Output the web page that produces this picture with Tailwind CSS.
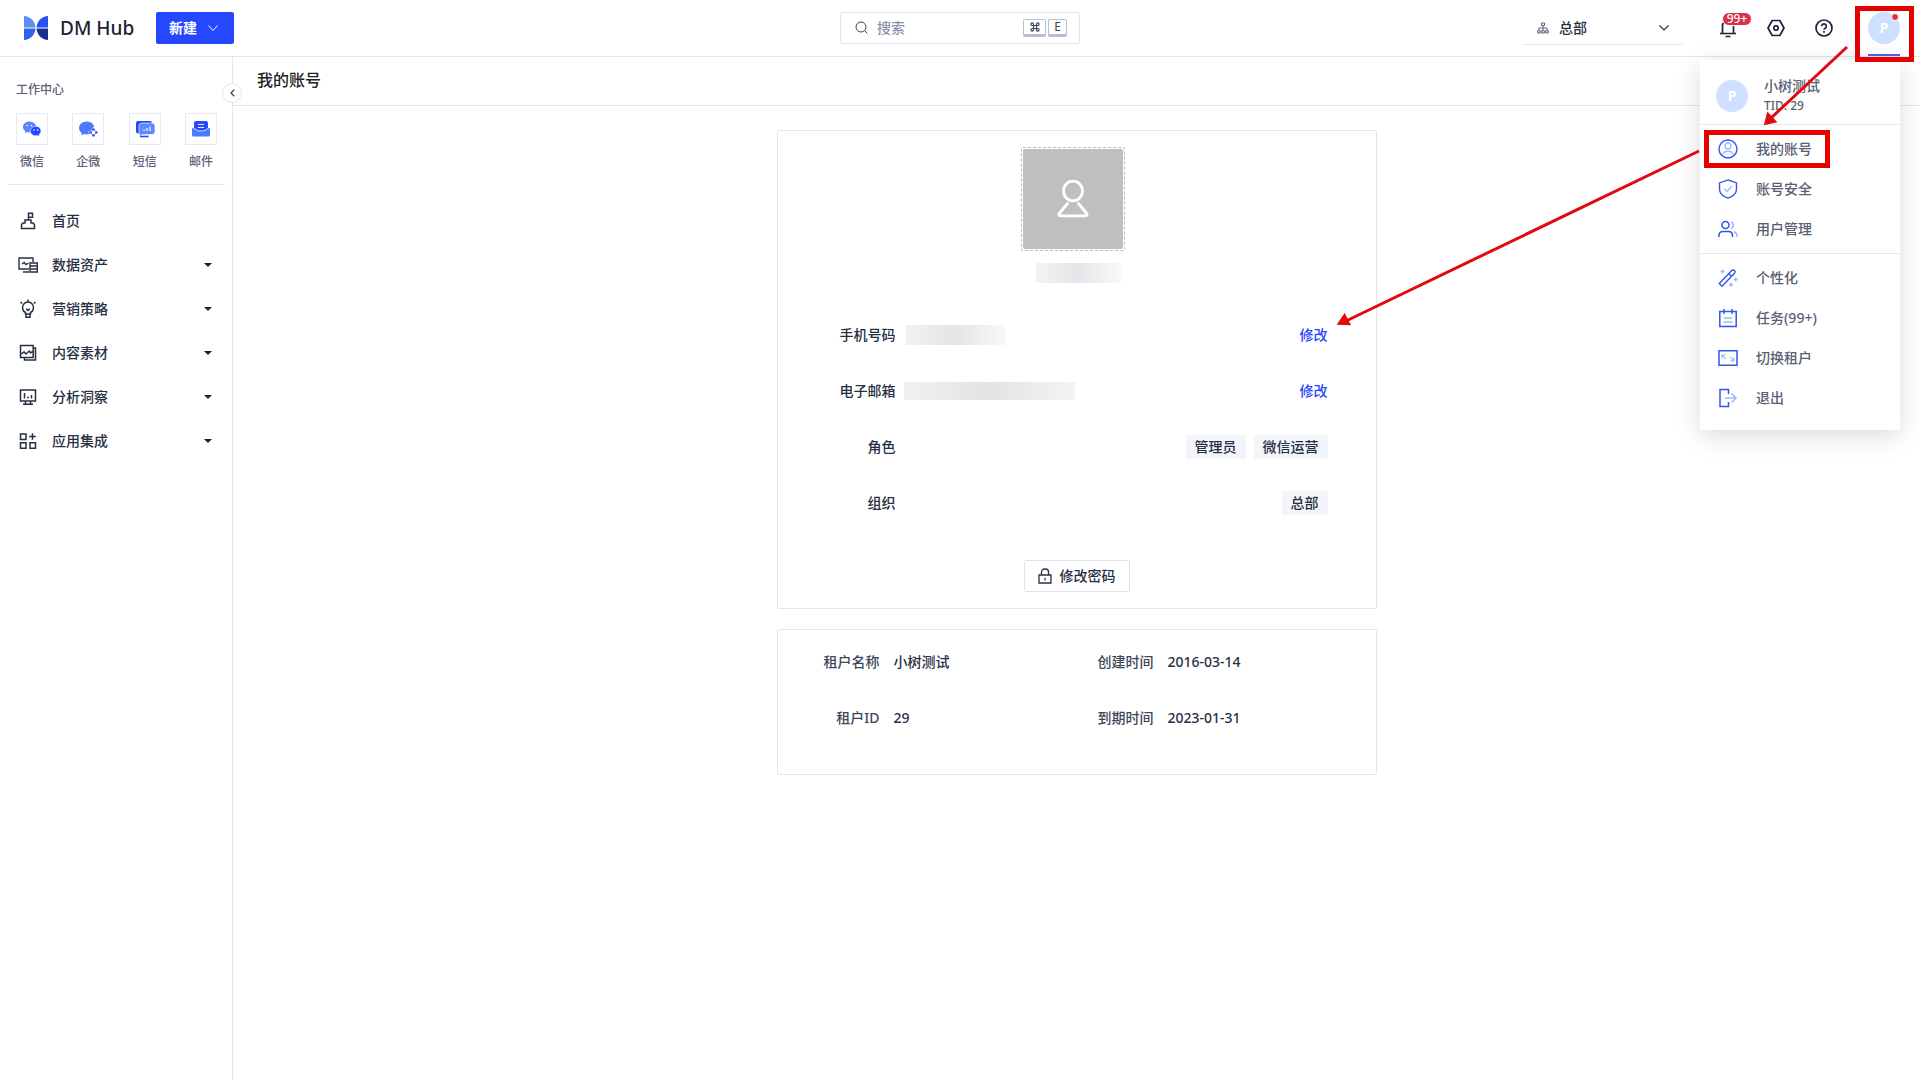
<!DOCTYPE html>
<html lang="zh-CN">
<head>
<meta charset="utf-8">
<meta name="viewport" content="width=device-width, initial-scale=1">
<title>DM Hub - 我的账号</title>
<script src="https://cdn.jsdelivr.net/npm/@tailwindcss/browser@4"></script>
</head>
<body class="flex min-h-screen flex-col bg-white font-['Noto_Sans','Noto_Sans_CJK_SC',sans-serif] text-sm text-[#273043]">

<header class="flex h-[57px] shrink-0 items-center justify-between border-b border-[#e4e6ef] px-5">
  <div class="flex flex-1 items-center pb-px">
    <svg class="ml-1 size-6 shrink-0" viewBox="0 0 24 24" aria-hidden="true">
      <path d="M0 0C6 0 11 5 11.500 11.500H0Z" fill="#5b8ff5"/>
      <path d="M24 0C18 0 13 5 12.500 11.500H24Z" fill="#2450f5"/>
      <path d="M0 12.500H11.500C11 19 6 24 0 24Z" fill="#2f62ee"/>
      <path d="M24 12.500H12.500C13 19 18 24 24 24Z" fill="#16308f"/>
    </svg>
    <span class="ml-3 w-24 whitespace-nowrap text-[19px] leading-7 font-medium text-[#1c2337]">DM Hub</span>
    <button class="flex h-8 w-[78px] items-center justify-between rounded-xs bg-[#2548ff] pl-[13px] pr-4 font-bold text-white">新建
      <svg class="w-2.5" viewBox="0 0 10 6" fill="none" stroke="currentColor"><path d="M.5.5 5 5.500 9.500.5"/></svg>
    </button>
  </div>
  <label class="flex h-8 w-60 shrink-0 items-center rounded-xs border border-[#e4e6ef] pl-3.5 pr-3">
    <svg class="size-3.5 shrink-0" viewBox="0 0 14 14" fill="none" stroke="#3f4658"><circle cx="6" cy="6" r="5"/><path d="m9.500 9.500 3 3"/></svg>
    <input class="ml-2 w-32 min-w-0 flex-1 font-medium outline-none placeholder:text-[#8a93ab]" type="search" placeholder="搜索" aria-label="搜索">
    <kbd class="mr-0.5 flex h-[18px] w-[23px] items-center justify-center rounded-xs border border-b-3 border-[#b9bfd2]">
      <svg class="size-2.5" viewBox="0 0 10 10" fill="none" stroke="#3f4658" stroke-width="1.200"><path d="M3.500 3.500h3v3h-3zM3.500 3.500H2.200A1.300 1.300 0 1 1 3.500 2.200zM6.500 3.500V2.200A1.300 1.300 0 1 1 7.800 3.500zM3.500 6.500v1.300A1.300 1.300 0 1 1 2.200 6.500zM6.500 6.500h1.300A1.300 1.300 0 1 1 6.500 7.800z"/></svg>
    </kbd>
    <kbd class="flex h-[18px] w-[19px] items-center justify-center rounded-xs border border-b-3 border-[#b9bfd2] font-['Noto_Sans'] text-xs leading-3 text-[#3f4658]">E</kbd>
  </label>
  <div class="flex flex-1 items-center justify-end">
    <button class="mr-9 flex h-[34px] w-40 items-center border-b border-[#e4e6ef] px-3.5 font-medium">
      <svg class="size-3" viewBox="0 0 12 12" fill="none" stroke="#5a6274"><path d="M4.500 1h3v2.500h-3zM6 3.500v5M2 8.500V6h8v2.500M.7 8.700h2.600v2.300H.7zM4.700 8.700h2.600v2.300H4.700zM8.700 8.700h2.600v2.300H8.700z"/></svg>
      <span class="ml-2.5 flex-1 text-left">总部</span>
      <svg class="w-2.5" viewBox="0 0 10 6" fill="none" stroke="#273043" stroke-width="1.200"><path d="M.5.5 5 5l4.500-4.500"/></svg>
    </button>
    <button class="relative mr-[30px] h-5 w-[18px]" aria-label="通知">
      <svg class="h-5 w-[18px]" viewBox="0 0 18 20" fill="none" stroke="#1c2337" stroke-width="1.700"><path d="M3.500 15V8a5.500 5.500 0 0 1 11 0v7M1 15.500h16M6.500 18.500h5"/></svg>
      <span class="absolute -top-1.5 left-[3px] flex h-3.5 w-[30px] items-center justify-center rounded-full border border-white bg-[#d92f48] text-xs font-medium leading-3 text-white">99+</span>
    </button>
    <button class="mr-[30px]" aria-label="设置">
      <svg class="size-[18px]" viewBox="0 0 18 18" fill="none" stroke="#1c2337" stroke-width="1.700"><path d="M5.200 1.500h7.600L17 9l-4.200 7.500H5.200L1 9z" stroke-linejoin="round"/><circle cx="9" cy="9" r="2.200"/></svg>
    </button>
    <button class="mr-[35px]" aria-label="帮助">
      <svg class="size-[18px]" viewBox="0 0 18 18" fill="none" stroke="#1c2337" stroke-width="1.700"><circle cx="9" cy="9" r="8"/><path d="M6.700 7.200a2.300 2.300 0 1 1 3.500 2c-.8.500-1.200.8-1.200 1.600M9 12v1.700"/></svg>
    </button>
    <button class="relative flex h-14 w-8 items-center border-b-2 border-[#4c62e8]" aria-label="账户">
      <span class="mt-0.5 flex size-8 items-center justify-center rounded-full bg-[#cfdfff] font-bold text-white">P</span>
      <span class="absolute top-[13px] right-px size-2 rounded-full border border-white bg-[#e0323c]"></span>
    </button>
  </div>
</header>

<div class="flex flex-1">
  <aside class="relative w-[233px] shrink-0 border-r border-[#e4e6ef]">
    <button class="absolute top-[26px] -right-2.5 flex size-5 items-center justify-center rounded-full border border-[#e4e6ef] bg-white" aria-label="收起">
      <svg class="h-2 w-[5px]" viewBox="0 0 5 8" fill="none" stroke="#3f4658" stroke-width="1.300"><path d="M4.300.7 1 4l3.300 3.300"/></svg>
    </button>
    <h2 class="px-4 pt-[25px] text-xs font-medium leading-4 text-[#5b6274]">工作中心</h2>
    <ul class="ml-2 mr-[7px] mt-[15px] flex justify-between border-b border-[#e4e6ef] px-2 pb-3.5 text-xs font-medium leading-4 text-[#5b6274]">
      <li><a href="#" class="flex w-8 flex-col items-center gap-[9px]"><span class="flex size-8 items-center justify-center border border-[#e8e9f2]">
        <svg class="size-5" viewBox="0 0 20 20"><path d="M7.500 2.500C3.900 2.500 1 4.800 1 7.900c0 1.700.9 3.200 2.300 4.200L3 14.300l2.200-1.200c.7.200 1.500.3 2.300.3 3.600 0 6.500-2.500 6.500-5.500s-2.900-5.400-6.500-5.400z" fill="#5b82ff"/><path d="M13.700 7.300c-3 0-5.400 2-5.400 4.700s2.400 4.800 5.400 4.800c.6 0 1.200-.1 1.800-.3l2 1-.4-1.900c1.200-.9 1.900-2.200 1.900-3.600 0-2.700-2.300-4.700-5.300-4.700z" fill="#2548ff" stroke="#fff" stroke-width=".6"/><g fill="#fff"><circle cx="5.200" cy="6.500" r=".8"/><circle cx="9.400" cy="6.500" r=".8"/><circle cx="12" cy="11" r=".8"/><circle cx="15.500" cy="11" r=".8"/></g></svg></span>微信</a></li>
      <li><a href="#" class="flex w-8 flex-col items-center gap-[9px]"><span class="flex size-8 items-center justify-center border border-[#e8e9f2]">
        <svg class="size-5" viewBox="0 0 20 20"><path d="M8.800 2.500C4.500 2.500 1 5.300 1 9c0 2 1 3.800 2.700 5l-.4 2.500 2.800-1.400c.9.300 1.700.4 2.700.4 1 0 1.900-.1 2.700-.4l4.500-5.300.3-.8c0-3.700-3.200-6.500-7.500-6.500z" fill="#4a7aff"/><path d="m15.500 9.600 1.400 2.300 2.300 1.400-2.300 1.400-1.400 2.300-1.400-2.300-2.300-1.400 2.300-1.400z" fill="#fff" stroke="#fff" stroke-width="2"/><path d="m15.500 10.300 3.100 3.100-3.100 3.100-3.100-3.100z" fill="#fff" stroke="#2548ff" stroke-width=".7"/><g fill="#2548ff"><circle cx="15.500" cy="10.400" r="1.200"/><circle cx="18.500" cy="13.400" r="1.200"/><circle cx="15.500" cy="16.400" r="1.200"/><circle cx="12.500" cy="13.400" r="1.200"/></g></svg></span>企微</a></li>
      <li><a href="#" class="flex w-8 flex-col items-center gap-[9px]"><span class="flex size-8 items-center justify-center border border-[#e8e9f2]">
        <svg class="size-5" viewBox="0 0 20 20"><rect x="1" y="2" width="16" height="12.500" rx="2" fill="#2548ff"/><path d="M7 4h10a3 3 0 0 1 3 3v5.500a3 3 0 0 1-3 3H7.500L5 17l-.6-2A3 3 0 0 1 4 12.500V7a3 3 0 0 1 3-3z" fill="#5b8aff" stroke="#fff" stroke-width=".6"/><path d="M9 12v-1.500M12 12V9M15 12V7.500" stroke="#fff" stroke-width="1.200"/><path d="M5 17.500h8.500" stroke="#2548ff" stroke-width="1.600"/></svg></span>短信</a></li>
      <li><a href="#" class="flex w-8 flex-col items-center gap-[9px]"><span class="flex size-8 items-center justify-center border border-[#e8e9f2]">
        <svg class="size-5" viewBox="0 0 20 20"><path d="M5 2h10a2 2 0 0 1 2 2v5l-4 2.500H7L3 9V4a2 2 0 0 1 2-2z" fill="#2548ff"/><path d="M1 8.500 7 12.300h6l6-3.800V16a1.500 1.500 0 0 1-1.500 1.500h-15A1.500 1.500 0 0 1 1 16z" fill="#4a7aff"/><path d="M7 5.500h6M7 8.500h6" stroke="#dce6ff" stroke-width="1.100"/></svg></span>邮件</a></li>
    </ul>
    <nav class="mt-3.5 flex flex-col font-medium" aria-label="主导航">
      <a href="#" class="flex h-11 items-center pl-[18px] pr-5"><svg class="size-5" viewBox="0 0 20 20" fill="none" stroke="#273043" stroke-width="1.500"><path d="M10.500 8.500V2.200h4v4h-4M7 12.500V9h6v3.500M7 12H5l-1.500 1.500v4h13v-4L15 12h-2"/></svg><span class="ml-3.5 flex-1">首页</span></a>
      <a href="#" class="flex h-11 items-center pl-[18px] pr-5"><svg class="size-5" viewBox="0 0 20 20" fill="none" stroke="#273043" stroke-width="1.400"><path d="M11 14H1V3h14v4M4 9l2.200-1.500L8 9.500 10.500 8M5 17h6M12 8h7.300v9H12zM12 11h7.300M12 14h7.300"/></svg><span class="ml-3.5 flex-1">数据资产</span><span class="border-x-4 border-t-4 border-x-transparent border-t-[#1c2337]"></span></a>
      <a href="#" class="flex h-11 items-center pl-[18px] pr-5"><svg class="size-5" viewBox="0 0 20 20" fill="none" stroke="#273043" stroke-width="1.500"><path d="M7.500 15v-1.500a5.500 5.500 0 1 1 5 0V15zM8 15v3.200h4V15M10 .5v2M2.500 3.200 4.200 4.500M17.500 3.200l-1.700 1.300M8.200 9.700l1.800 1.800 1.800-1.800"/></svg><span class="ml-3.5 flex-1">营销策略</span><span class="border-x-4 border-t-4 border-x-transparent border-t-[#1c2337]"></span></a>
      <a href="#" class="flex h-11 items-center pl-[18px] pr-5"><svg class="size-5" viewBox="0 0 20 20" fill="none" stroke="#273043" stroke-width="1.500"><path d="M2.500 2.500h12.700v12H2.500zM3 11l3-2 2 2 3.200-3 1.300 1.700 2.500-1.200M15.500 5h2v12H6.500v-2"/></svg><span class="ml-3.5 flex-1">内容素材</span><span class="border-x-4 border-t-4 border-x-transparent border-t-[#1c2337]"></span></a>
      <a href="#" class="flex h-11 items-center pl-[18px] pr-5"><svg class="size-5" viewBox="0 0 20 20" fill="none" stroke="#273043" stroke-width="1.500"><path d="M2.500 3h15v11h-15zM7.500 14v3M12.500 14v3M5 17.200h10M6.500 6v5.500M10 9.500v2M13.500 8v3.500"/></svg><span class="ml-3.5 flex-1">分析洞察</span><span class="border-x-4 border-t-4 border-x-transparent border-t-[#1c2337]"></span></a>
      <a href="#" class="flex h-11 items-center pl-[18px] pr-5"><svg class="size-5" viewBox="0 0 20 20" fill="none" stroke="#273043" stroke-width="1.500"><path d="M2.500 3h5.500v5.500H2.500zM2.500 11.700h5.500v5.500H2.500zM12 11.700h5.500v5.500H12zM14.500 2.200v6.600M11.200 5.500h6.600"/></svg><span class="ml-3.5 flex-1">应用集成</span><span class="border-x-4 border-t-4 border-x-transparent border-t-[#1c2337]"></span></a>
    </nav>
  </aside>

  <main class="min-w-0 flex-1">
    <h1 class="flex h-[49px] items-center border-b border-[#e4e6ef] px-6 pb-0.5 text-base font-medium text-[#222]">我的账号</h1>
    <section class="mx-auto mt-6 flex w-full max-w-[600px] flex-col items-center rounded-xs border border-[#e4e6ef] pt-4 pb-4">
      <div class="mr-[7px] size-[104px] rounded-xs border border-dashed border-[#bbb] p-px">
        <div class="flex size-full items-center justify-center rounded-xs bg-[#bfbfbf]">
          <svg class="h-10 w-8" viewBox="0 0 32 40" fill="none" stroke="#fff" stroke-width="2.800" stroke-linecap="round" stroke-linejoin="round"><ellipse cx="16" cy="12" rx="9.500" ry="9.800"/><path d="M10.500 24.500 2.300 34.500c-.8 1.200-.2 2.300 1 2.300h25.400c1.200 0 1.800-1.100 1-2.300l-8.200-10"/></svg>
        </div>
      </div>
      <div class="mt-3 ml-1 h-5 w-[86px] bg-linear-to-r from-[#f3f3f5] via-[#e6e6ea] to-[#fafafb]"></div>
      <dl class="mt-6 w-full pl-[62px] pr-12 font-medium">
        <div class="flex h-14 items-center"><dt class="w-14 text-right">手机号码</dt><dd class="ml-2.5 flex flex-1 items-center justify-between"><span class="h-5 w-[100px] bg-linear-to-r from-[#f1f1f1] via-[#e5e5e5] to-[#f9f9f9]"></span><a href="#" class="text-[#2548ff]">修改</a></dd></div>
        <div class="flex h-14 items-center"><dt class="w-14 text-right">电子邮箱</dt><dd class="ml-2 flex flex-1 items-center justify-between"><span class="h-[18px] w-[171px] bg-linear-to-r from-[#f1f1f1] via-[#e3e3e3] to-[#f4f4f4]"></span><a href="#" class="text-[#2548ff]">修改</a></dd></div>
        <div class="flex h-14 items-center"><dt class="w-14 text-right">角色</dt><dd class="flex flex-1 justify-end gap-2"><span class="h-6 rounded-xs bg-[#f4f5fa] px-[9px] leading-6">管理员</span><span class="h-6 rounded-xs bg-[#f4f5fa] px-[9px] leading-6">微信运营</span></dd></div>
        <div class="flex h-14 items-center"><dt class="w-14 text-right">组织</dt><dd class="flex flex-1 justify-end"><span class="h-6 rounded-xs bg-[#f4f5fa] px-[9px] leading-6">总部</span></dd></div>
      </dl>
      <button class="mt-[29px] flex h-8 w-[106px] items-center justify-center gap-2 rounded-xs border border-[#dfe2ec] font-medium">
        <svg class="h-4 w-3.5" viewBox="0 0 14 16" fill="none" stroke="#273043" stroke-width="1.300"><path d="M1 7h12v8H1zM3.500 7V4a3 3 0 0 1 3-3h1a3 3 0 0 1 3 3v3M7 10v2.500"/></svg>修改密码</button>
    </section>
    <section class="mx-auto mt-5 w-full max-w-[600px] rounded-xs border border-[#e4e6ef] pt-1 pb-7">
      <dl class="grid grid-cols-[102px_1fr_89px_222px] font-medium leading-14">
        <dt class="text-right text-[#40475a]">租户名称</dt><dd class="pl-3.5">小树测试</dd>
        <dt class="text-right text-[#40475a]">创建时间</dt><dd class="pl-3.5">2016-03-14</dd>
        <dt class="text-right text-[#40475a]">租户ID</dt><dd class="pl-3.5">29</dd>
        <dt class="text-right text-[#40475a]">到期时间</dt><dd class="pl-3.5">2023-01-31</dd>
      </dl>
    </section>
  </main>
</div>

<div class="absolute top-[60px] right-5 w-[200px] bg-white pb-3 font-medium text-[#596072] shadow-[0_6px_24px_rgba(0,0,0,0.15)]" role="menu">
  <div class="flex h-[65px] items-center gap-4 border-b border-[#e8e9ef] px-4 pt-2">
    <span class="flex size-8 items-center justify-center rounded-full bg-[#cfdfff] font-bold text-white">P</span>
    <div><p class="leading-5">小树测试</p><p class="text-xs leading-5">TID: 29</p></div>
  </div>
  <ul class="border-b border-[#e8e9ef] py-1">
    <li><a href="#" role="menuitem" class="flex h-10 items-center gap-[18px] px-[18px]"><svg class="size-5" viewBox="0 0 20 20" fill="none" stroke-width="1.400"><circle cx="10" cy="10" r="9" stroke="#3355e8"/><g stroke="#9db8ff"><circle cx="10" cy="7" r="3"/><path d="M4.500 16c.5-2.800 2.700-3.800 5.500-3.800s5 1 5.500 3.800"/></g></svg>我的账号</a></li>
    <li><a href="#" role="menuitem" class="flex h-10 items-center gap-[18px] px-[18px]"><svg class="size-5" viewBox="0 0 20 20" fill="none" stroke-width="1.400"><path d="m10 .9 8.500 3v6c0 4.500-4 7.600-8.500 9.300-4.500-1.700-8.500-4.800-8.500-9.300v-6z" stroke="#3355e8"/><path d="m6.300 9.800 2.700 2.700 4.700-5.200" stroke="#9db8ff"/></svg>账号安全</a></li>
    <li><a href="#" role="menuitem" class="flex h-10 items-center gap-[18px] px-[18px]"><svg class="size-5" viewBox="0 0 20 20" fill="none" stroke-width="1.500"><g stroke="#3355e8"><circle cx="7.500" cy="6" r="3.500"/><path d="M1 18v-1.500c0-2.500 1.800-4 4-4h5.500c2.200 0 4 1.500 4 4V18"/></g><path d="M13 2.700a3.500 3.500 0 0 1 0 6.600M16 12.700c2 .6 3 2 3 4V18" stroke="#9db8ff"/></svg>用户管理</a></li>
  </ul>
  <ul class="pt-1">
    <li><a href="#" role="menuitem" class="flex h-10 items-center gap-[18px] px-[18px]"><svg class="size-5" viewBox="0 0 20 20" fill="none" stroke-width="1.400"><path d="m1.200 15.600 12.600-13a1.800 1.800 0 0 1 2.700 2.700L4 18.300zM10.700 5.600l2.800 2.800" stroke="#3355e8"/><path d="M4.500 1.500v4M2.500 3.500h4M17.700 9.500v4M15.700 11.500h4M13 14.700v4M11 16.700h4" stroke="#9db8ff"/></svg>个性化</a></li>
    <li><a href="#" role="menuitem" class="flex h-10 items-center gap-[18px] px-[18px]"><svg class="size-5" viewBox="0 0 20 20" fill="none" stroke-width="1.500"><path d="M1.800 3.500h16.400v15H1.800zM6 1v5M14 1v5" stroke="#3355e8"/><path d="M5.500 10h9M5.500 14h9" stroke="#9db8ff"/></svg>任务(99+)</a></li>
    <li><a href="#" role="menuitem" class="flex h-10 items-center gap-[18px] px-[18px]"><svg class="size-5" viewBox="0 0 20 20" fill="none" stroke-width="1.500"><path d="M1 2.700h18v14.600H1z" stroke="#3355e8"/><path d="M4 10.500V7h4M4.300 7.300l3.500 3.500M16 9.500V13h-4M15.700 12.700l-3.500-3.500" stroke="#9db8ff" stroke-width="1.200"/></svg>切换租户</a></li>
    <li><a href="#" role="menuitem" class="flex h-10 items-center gap-[18px] px-[18px]"><svg class="size-5" viewBox="0 0 20 20" fill="none" stroke-width="1.500"><path d="M10.500 6V1.500H2v17h8.500V14" stroke="#3355e8"/><path d="M7 10h11M13.500 5.500 18 10l-4.500 4.500" stroke="#9db8ff"/></svg>退出</a></li>
  </ul>
</div>

<div class="pointer-events-none absolute top-1.5 right-1.5 h-14 w-[59px] border-5 border-[#e60000]"></div>
<div class="pointer-events-none absolute top-[130px] right-[90px] h-[38px] w-[126px] border-5 border-[#e60000]"></div>
<svg class="pointer-events-none absolute top-0 right-0 h-[340px] w-[600px]" viewBox="0 0 600 340" fill="#e00a10" stroke="#e00a10" stroke-width="3" aria-hidden="true">
  <path d="M527 47 451 118M379 151 26 321"/>
  <path d="m445.500 123.500 2.500-9.500 7 7.500zM19 323.500l5.500-8 4.500 8.500z" stroke-width="2.500"/>
</svg>
</body>
</html>
